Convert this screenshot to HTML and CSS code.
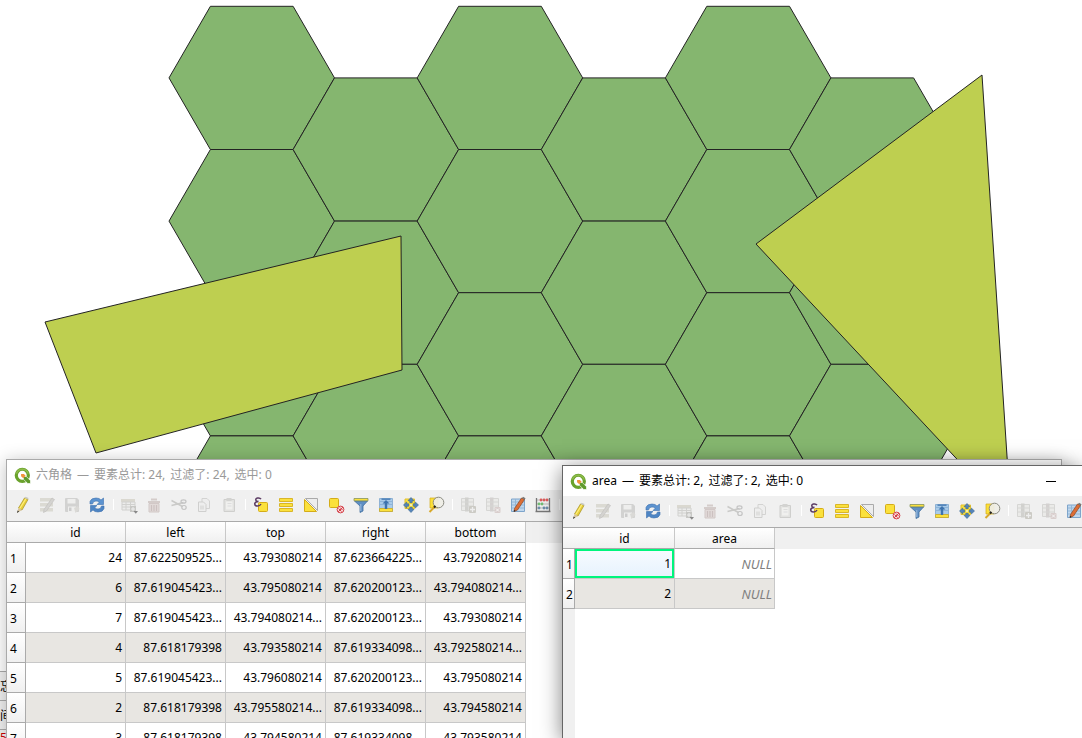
FILE: index.html
```html
<!DOCTYPE html>
<html lang="zh-CN">
<head>
<meta charset="utf-8">
<title>QGIS</title>
<link rel="stylesheet" href="styles.css">
</head>
<body>
<svg class="defs" aria-hidden="true">
  <symbol id="logo" viewBox="0 0 18 18">
    <circle cx="8.800" cy="8.800" r="6.400" fill="none" stroke="#6aa22c" stroke-width="3.400"/>
    <path d="M2.600 7a6.500 6.500 0 0 1 12.400 0" fill="none" stroke="#8dbb4a" stroke-width="1.500"/>
    <path d="M10 10h3l4.500 4.500V17.500H14.500L10 13z" fill="#5f9a2b" stroke="#fff" stroke-width=".7"/>
    <path d="M7.500 7.500h3l1.800 1.800-2.500 2.500-2.300-2z" fill="#f1943c"/>
  </symbol>
  <symbol id="pencil" viewBox="0 0 18 18">
    <path d="M11.500 2l3.500 1.500-6 10.500-3.500-2z" fill="#e8cf3c" stroke="#a58f21" stroke-width=".7"/>
    <path d="M13 2.500l-6.500 10.500" stroke="#fff07a" stroke-width="1.200"/>
    <path d="M11.500 2l1-1.300 3 1.400-.5 1.400z" fill="#c8c8c0"/>
    <path d="M5.500 12l3.500 2-5 3z" fill="#d6c39b"/><path d="M4 17l.6-2.600 1.600 1.200z" fill="#333"/>
  </symbol>
  <symbol id="multi" viewBox="0 0 18 18">
    <path d="M2 2h13v3.500H2zM2 7h13v3.500H2zM2 12h13v3.500H2z" fill="#c8c5b8"/>
    <path d="M14 2l2.500 1.500-8 11.500-3 1.500.5-3z" fill="#b9b7b2" stroke="#8e8d88" stroke-width=".6"/>
  </symbol>
  <symbol id="save" viewBox="0 0 18 18">
    <path d="M2 3q0-1 1-1h11l2 2v11q0 1-1 1H3q-1 0-1-1z" fill="#b5b5b3"/>
    <path d="M4.500 3h8v4.500h-8zM5 10.500h8V16H5z" fill="#eeeeec"/>
    <path d="M6 11.500h2.500v3.500H6z" fill="#aaa"/><path d="M11 12l4-2 1.500 3-4 4z" fill="#c6c4bd"/>
  </symbol>
  <symbol id="refresh" viewBox="0 0 18 18">
    <path d="M2 8V5.500Q3 2 8 2q3.500 0 5 2l2.500-2v6.500H9l2.300-2.300Q10 5 8 5 5 5 4.500 8z" fill="#5c93d0" stroke="#3c70ae" stroke-width=".6"/>
    <path d="M16 10v2.500Q15 16 10 16q-3.500 0-5-2l-2.500 2V9.500H9l-2.300 2.300Q8 13 10 13q3 0 3.500-3z" fill="#4e85c4" stroke="#3c70ae" stroke-width=".6"/>
  </symbol>
  <symbol id="add" viewBox="0 0 18 18">
    <path d="M1 3h14v3H1z" fill="#c5c1b1"/><path d="M2 6h13v8H2z" fill="#e9e9e7" stroke="#b4b4b0"/>
    <path d="M2 8.500h13M2 11h13M6 6v8M10.500 6v8" stroke="#b4b4b0"/>
    <path d="M10 10h6v6h-6z" fill="#a2a29c"/><path d="M13 11v4M11 13h4" stroke="#eee"/><path d="M13.500 15h4.500l-2.200 2.700z" fill="#222"/>
  </symbol>
  <symbol id="trash" viewBox="0 0 18 18">
    <path d="M3 5h12v2H3zM6 2.500h6v2H6z" fill="#baa9a6"/>
    <path d="M4 7.500h10v8.500H4z" fill="#d4c5c2" stroke="#b5a29f"/><path d="M6.500 9v6M9 9v6M11.500 9v6" stroke="#a99491" stroke-width="1.200"/>
  </symbol>
  <symbol id="cut" viewBox="0 0 18 18">
    <path d="M1.500 4.500l11 6M1.500 9.500l12-3" stroke="#a5a5a2" stroke-width="1.500" fill="none"/>
    <ellipse cx="13.500" cy="5.500" rx="2.500" ry="1.700" fill="none" stroke="#999" stroke-width="1.200"/>
    <ellipse cx="14" cy="11.500" rx="2.200" ry="2" fill="none" stroke="#999" stroke-width="1.200"/>
  </symbol>
  <symbol id="copy" viewBox="0 0 18 18">
    <path d="M7 2.500h5l2.500 2.500v7.500H7z" fill="#eee" stroke="#b8b8b5"/>
    <path d="M3.500 6h5L11 8.500v7H3.500z" fill="#eee" stroke="#b0b0ad"/><path d="M5 9.500h4v4H5z" fill="#d0d0cd"/>
  </symbol>
  <symbol id="paste" viewBox="0 0 18 18">
    <path d="M4 3.500h10.500v12H4z" fill="#d5d5d1" stroke="#b0b0ac"/><path d="M6 5.500h6.500v8H6z" fill="#f0f0ee"/>
    <path d="M6.500 2h5v3h-5z" fill="#b7b7b3"/><path d="M7.500 7.500h4M7.500 10h4" stroke="#ccc"/>
  </symbol>
  <symbol id="expr" viewBox="0 0 18 18">
    <rect x="6.500" y="6.500" width="9" height="9" rx="1" fill="#fbe13c" stroke="#d4ac18"/>
    <path d="M9 3.200Q8 1.500 5.500 2 3.200 2.600 4 4.500 4.500 5.700 6.500 5.600 3 5.700 2.700 7.700 2.700 10 5.500 10 8 10 9 8" fill="none" stroke="#5b3b63" stroke-width="1.500"/>
  </symbol>
  <symbol id="all" viewBox="0 0 18 18">
    <path d="M2.500 2.500h13v3h-13zM2.500 7.500h13v3h-13zM2.500 12.500h13v3h-13z" fill="#fbe13c" stroke="#d9b629" stroke-linejoin="round"/>
  </symbol>
  <symbol id="invert" viewBox="0 0 18 18">
    <path d="M3.500 2.500h12v12z" fill="#ededed" stroke="#aaa"/><path d="M2.500 3.500l12 12h-12z" fill="#fbe13c" stroke="#d4ac18"/>
  </symbol>
  <symbol id="deselect" viewBox="0 0 18 18">
    <rect x="2.500" y="2.500" width="9" height="9" rx="1" fill="#fbe13c" stroke="#d4ac18"/>
    <circle cx="13.500" cy="13.500" r="3.400" fill="#f8dada" stroke="#d4414a"/><path d="M11 16l5-5M11.500 12.500l3 3M13 11.500l2.500 2.500" stroke="#d4414a"/>
  </symbol>
  <symbol id="filter" viewBox="0 0 18 18">
    <path d="M2.500 5h13L11 10v5l-3 1.500V10z" fill="#5f8fc3" stroke="#42709f" stroke-width=".8"/>
    <path d="M2 2.500h14v2.300H2z" fill="#fbe13c" stroke="#87935c" stroke-width=".8"/><path d="M8.800 8v7" stroke="#9ebcdf"/>
  </symbol>
  <symbol id="top" viewBox="0 0 18 18">
    <path d="M2.500 2.500h13v13h-13z" fill="#a9cbe9" stroke="#8fb2d4"/><path d="M3 5.500h12M3 8.500h12" stroke="#8db4d9"/>
    <path d="M2.500 12.500h13v3h-13z" fill="#fbe13c" stroke="#cbb13b"/><path d="M4.500 2.500h9v1.200h-9zM9 4l3.500 3.500h-2.300V13H7.800V7.500H5.500z" fill="#3d73ae"/>
  </symbol>
  <symbol id="pan" viewBox="0 0 18 18">
    <path d="M3 3h9.500v9.500H3z" fill="#fbe13c" stroke="#e2c02c"/>
    <path d="M9 1.500l3 3.200h-1.800v2H7.800v-2H6zM9 16.500l3-3.200h-1.800v-2H7.800v2H6zM1.500 9l3.200-3v1.800h2v2.400h-2V12zM16.500 9l-3.200-3v1.800h-2v2.400h2V12z" fill="#5585bc" stroke="#38658f" stroke-width=".6"/>
    <path d="M8 8h2v2H8z" fill="#f7f0ae"/>
  </symbol>
  <symbol id="zoom" viewBox="0 0 18 18">
    <path d="M3 2h8v10H3z" fill="#fbdf38" stroke="#d4ac18" stroke-width=".7"/>
    <circle cx="11.500" cy="6.500" r="5.300" fill="#eeede5" fill-opacity=".94" stroke="#8b8b82"/>
    <path d="M8 10.500L2.500 16" stroke="#d8a92a" stroke-width="2"/><path d="M8.500 10l-1.500 1.500" stroke="#222" stroke-width="2"/>
  </symbol>
  <symbol id="newfield" viewBox="0 0 18 18">
    <path d="M2.500 2.500h12v12h-12z" fill="#e5e5e2" stroke="#bdbdb9"/><path d="M6 1.500h3.500v14H6z" fill="#b3b3ad"/><path d="M2.500 6h12M2.500 10h12" stroke="#bdbdb9"/>
    <rect x="10" y="10" width="7" height="7" rx="1" fill="#aaa79c"/><path d="M13.500 11v5M11 13.500h5" stroke="#eee" stroke-width="1.300"/>
  </symbol>
  <symbol id="delfield" viewBox="0 0 18 18">
    <path d="M2.500 2.500h12v12h-12z" fill="#e5e5e2" stroke="#bdbdb9"/><path d="M6 1.500h3.500v14H6z" fill="#b9b4b2"/><path d="M2.500 6h12M2.500 10h12" stroke="#bdbdb9"/>
    <rect x="10.500" y="11" width="6" height="6" rx="1" fill="#c3aeac"/><path d="M12 12.500l3 3m0-3l-3 3" stroke="#fff"/>
  </symbol>
  <symbol id="organize" viewBox="0 0 18 18">
    <path d="M2.500 3h13v12.500h-13z" fill="#bfd7ee" stroke="#7ea5cb"/><path d="M3 6h12M3 9h12M3 12h12M6.500 3v12" stroke="#93b6d6"/>
    <path d="M12.500 2l3 1.500L8.500 14l-3.500 1.500.5-3z" fill="#dd6d35" stroke="#8a4a2a" stroke-width=".7"/><path d="M13 2l1-1.200 2.600 1.500-1 1.200z" fill="#777"/><path d="M4.800 15.800l.2-2 1.600 1.200z" fill="#222"/>
  </symbol>
  <symbol id="abacus" viewBox="0 0 18 18">
    <path d="M2 4h14M2 8h14M2 12h14" stroke="#bbb"/>
    <path d="M2.500 2v14M15.500 2v14M1.500 15.500h15" stroke="#777" stroke-width="1.300"/>
    <g fill="#de5c5c"><circle cx="7" cy="4" r="1.400"/><circle cx="10" cy="4" r="1.400"/><circle cx="13" cy="4" r="1.400"/></g>
    <g fill="#72bd74"><circle cx="5" cy="8" r="1.400"/><circle cx="8" cy="8" r="1.400"/></g>
    <g fill="#6d8eaa"><circle cx="5" cy="12" r="1.400"/><circle cx="10" cy="12" r="1.400"/><circle cx="13" cy="12" r="1.400"/></g>
  </symbol>
</svg>

<main class="desktop">
  <svg class="map" viewBox="0 0 1082 738" preserveAspectRatio="xMinYMin slice" role="img" aria-label="六角格">
    <defs><path id="hex" d="M0 71.600L41.400 0h82.700l41.400 71.600-41.400 71.600H41.400z"/></defs>
    <g fill="#85b66f" stroke="#232323">
      <use href="#hex" x="169" y="6.300"/><use href="#hex" x="169" y="149.500"/><use href="#hex" x="169" y="292.700"/><use href="#hex" x="169" y="435.900"/>
      <use href="#hex" x="293.100" y="77.900"/><use href="#hex" x="293.100" y="221.100"/><use href="#hex" x="293.100" y="364.300"/>
      <use href="#hex" x="417.200" y="6.300"/><use href="#hex" x="417.200" y="149.500"/><use href="#hex" x="417.200" y="292.700"/><use href="#hex" x="417.200" y="435.900"/>
      <use href="#hex" x="541.300" y="77.900"/><use href="#hex" x="541.300" y="221.100"/><use href="#hex" x="541.300" y="364.300"/>
      <use href="#hex" x="665.400" y="6.300"/><use href="#hex" x="665.400" y="149.500"/><use href="#hex" x="665.400" y="292.700"/><use href="#hex" x="665.400" y="435.900"/>
      <use href="#hex" x="789.500" y="77.900"/><use href="#hex" x="789.500" y="221.100"/><use href="#hex" x="789.500" y="364.300"/>
    </g>
    <path d="M45 322l356-86 1 134-306 83zM982 75L756 244l255 273z" fill="#becf50" stroke="#232323"/>
  </svg>

  <aside class="dock"><div class="dock-row">忘</div><div class="dock-row">间</div><div class="dock-row dock-red">5</div></aside>

  <section class="window window-grid">
    <header class="titlebar titlebar-inactive"><svg class="logo"><use href="#logo"/></svg><span>六角格</span><span>—</span><span>要素总计: 24,</span><span>过滤了: 24,</span><span>选中: 0</span></header>
    <nav class="toolbar">
      <button class="tool" aria-label="切换编辑模式"><svg><use href="#pencil"/></svg></button>
      <button class="tool" disabled aria-label="多重编辑"><svg><use href="#multi"/></svg></button>
      <button class="tool" disabled aria-label="保存编辑"><svg><use href="#save"/></svg></button>
      <button class="tool" aria-label="重新加载"><svg><use href="#refresh"/></svg></button>
      <span class="sep"></span>
      <button class="tool" disabled aria-label="添加要素"><svg><use href="#add"/></svg></button>
      <button class="tool" disabled aria-label="删除要素"><svg><use href="#trash"/></svg></button>
      <button class="tool" disabled aria-label="剪切"><svg><use href="#cut"/></svg></button>
      <button class="tool" disabled aria-label="复制"><svg><use href="#copy"/></svg></button>
      <button class="tool" disabled aria-label="粘贴"><svg><use href="#paste"/></svg></button>
      <span class="sep"></span>
      <button class="tool" aria-label="按表达式选择"><svg><use href="#expr"/></svg></button>
      <button class="tool" aria-label="全选"><svg><use href="#all"/></svg></button>
      <button class="tool" aria-label="反选"><svg><use href="#invert"/></svg></button>
      <button class="tool" aria-label="取消选择"><svg><use href="#deselect"/></svg></button>
      <button class="tool" aria-label="过滤"><svg><use href="#filter"/></svg></button>
      <button class="tool" aria-label="移到顶部"><svg><use href="#top"/></svg></button>
      <button class="tool" aria-label="平移"><svg><use href="#pan"/></svg></button>
      <button class="tool" aria-label="缩放"><svg><use href="#zoom"/></svg></button>
      <span class="sep"></span>
      <button class="tool" disabled aria-label="新建字段"><svg><use href="#newfield"/></svg></button>
      <button class="tool" disabled aria-label="删除字段"><svg><use href="#delfield"/></svg></button>
      <button class="tool" aria-label="组织列"><svg><use href="#organize"/></svg></button>
      <button class="tool" aria-label="字段计算器"><svg><use href="#abacus"/></svg></button>
      <span class="sep"></span>
    </nav>
    <div class="sheet">
      <table class="grid">
        <colgroup><col class="col-num"><col class="col"><col class="col"><col class="col"><col class="col"><col class="col"></colgroup>
        <thead><tr><th class="corner"></th><th>id</th><th>left</th><th>top</th><th>right</th><th>bottom</th></tr></thead>
        <tbody>
          <tr><th>1</th><td>24</td><td>87.622509525...</td><td>43.793080214</td><td>87.623664225...</td><td>43.792080214</td></tr>
          <tr><th>2</th><td>6</td><td>87.619045423...</td><td>43.795080214</td><td>87.620200123...</td><td>43.794080214...</td></tr>
          <tr><th>3</th><td>7</td><td>87.619045423...</td><td>43.794080214...</td><td>87.620200123...</td><td>43.793080214</td></tr>
          <tr><th>4</th><td>4</td><td>87.618179398</td><td>43.793580214</td><td>87.619334098...</td><td>43.792580214...</td></tr>
          <tr><th>5</th><td>5</td><td>87.619045423...</td><td>43.796080214</td><td>87.620200123...</td><td>43.795080214</td></tr>
          <tr><th>6</th><td>2</td><td>87.618179398</td><td>43.795580214...</td><td>87.619334098...</td><td>43.794580214</td></tr>
          <tr><th>7</th><td>3</td><td>87.618179398</td><td>43.794580214</td><td>87.619334098...</td><td>43.793580214</td></tr>
        </tbody>
      </table>
    </div>
  </section>

  <section class="window window-area">
    <header class="titlebar"><svg class="logo"><use href="#logo"/></svg><span>area</span><span>—</span><span>要素总计: 2,</span><span>过滤了: 2,</span><span>选中: 0</span><button class="minimize" aria-label="最小化"></button></header>
    <nav class="toolbar">
      <button class="tool" aria-label="切换编辑模式"><svg><use href="#pencil"/></svg></button>
      <button class="tool" disabled aria-label="多重编辑"><svg><use href="#multi"/></svg></button>
      <button class="tool" disabled aria-label="保存编辑"><svg><use href="#save"/></svg></button>
      <button class="tool" aria-label="重新加载"><svg><use href="#refresh"/></svg></button>
      <span class="sep"></span>
      <button class="tool" disabled aria-label="添加要素"><svg><use href="#add"/></svg></button>
      <button class="tool" disabled aria-label="删除要素"><svg><use href="#trash"/></svg></button>
      <button class="tool" disabled aria-label="剪切"><svg><use href="#cut"/></svg></button>
      <button class="tool" disabled aria-label="复制"><svg><use href="#copy"/></svg></button>
      <button class="tool" disabled aria-label="粘贴"><svg><use href="#paste"/></svg></button>
      <span class="sep"></span>
      <button class="tool" aria-label="按表达式选择"><svg><use href="#expr"/></svg></button>
      <button class="tool" aria-label="全选"><svg><use href="#all"/></svg></button>
      <button class="tool" aria-label="反选"><svg><use href="#invert"/></svg></button>
      <button class="tool" aria-label="取消选择"><svg><use href="#deselect"/></svg></button>
      <button class="tool" aria-label="过滤"><svg><use href="#filter"/></svg></button>
      <button class="tool" aria-label="移到顶部"><svg><use href="#top"/></svg></button>
      <button class="tool" aria-label="平移"><svg><use href="#pan"/></svg></button>
      <button class="tool" aria-label="缩放"><svg><use href="#zoom"/></svg></button>
      <span class="sep"></span>
      <button class="tool" disabled aria-label="新建字段"><svg><use href="#newfield"/></svg></button>
      <button class="tool" disabled aria-label="删除字段"><svg><use href="#delfield"/></svg></button>
      <button class="tool" aria-label="组织列"><svg><use href="#organize"/></svg></button>
    </nav>
    <div class="sheet sheet-narrow">
      <table class="grid">
        <colgroup><col class="col-slim"><col class="col"><col class="col"></colgroup>
        <thead><tr><th class="corner"></th><th>id</th><th>area</th></tr></thead>
        <tbody>
          <tr><th>1</th><td class="current">1</td><td class="null">NULL</td></tr>
          <tr><th>2</th><td>2</td><td class="null">NULL</td></tr>
        </tbody>
      </table>
    </div>
  </section>
</main>
</body>
</html>
```
FILE: styles.css
```css
* { box-sizing: border-box; }
body {
  margin: 0;
  background: #fff;
  color: #000;
  font: 12px/16px "Noto Sans", "Noto Sans CJK SC", sans-serif;
}
.defs { position: absolute; width: 0; height: 0; }
.desktop { position: relative; height: 100vh; overflow: hidden; }
.map { display: block; width: 100%; height: 100%; }

.dock {
  position: absolute;
  left: 0;
  bottom: 0;
  width: 6px;
  height: 67px;
  overflow: hidden;
  background: #f0f0f0;
}
.dock-row { height: 29px; padding-top: 7px; border-top: 1px solid #aaa; white-space: nowrap; }
.dock-red { padding-top: 0; color: #c00; }

.window {
  position: absolute;
  bottom: 0;
  display: flex;
  flex-direction: column;
  background: #fff;
}
.window-grid {
  top: 459px;
  left: 6px;
  right: 20px;
  border: 1px solid #aaa;
  border-bottom: 0;
  box-shadow: 0 2px 16px rgba(0, 0, 0, .25);
}
.window-area {
  top: 465px;
  left: 562px;
  right: 0;
  border-top: 1px solid #666;
  border-left: 1px solid #666;
  box-shadow: 0 4px 20px rgba(0, 0, 0, .5);
}
.titlebar {
  display: flex;
  flex: none;
  align-items: center;
  gap: 5px;
  height: 30px;
  padding: 0 26px 0 7px;
  white-space: nowrap;
}
.titlebar-inactive { color: #999; }
.logo { width: 17px; height: 17px; }
.minimize {
  width: 11px;
  height: 16px;
  margin-left: auto;
  padding: 0;
  border: 0;
  background: linear-gradient(#000, #000) center / 10px 1px no-repeat;
}
.toolbar {
  display: flex;
  flex: none;
  align-items: center;
  height: 31px;
  padding: 0 0 2px 2px;
  overflow: hidden;
  background: #f0f0f0;
}
.tool {
  display: flex;
  flex: none;
  align-items: center;
  justify-content: center;
  width: 25px;
  height: 25px;
  padding: 0;
  border: 0;
  background: none;
}
.tool svg { width: 18px; height: 18px; }
.tool:disabled { opacity: .5; }
.sep {
  flex: none;
  width: 7px;
  height: 11px;
  background: linear-gradient(#fff, #fff) 4px 0 / 1px 100% no-repeat;
}

.sheet {
  flex: 1;
  min-height: 0;
  overflow: hidden;
  border-top: 1px solid #aaa;
  background: linear-gradient(#f0f0f0, #f0f0f0) 0 0 / 100% 21px no-repeat;
}
.sheet-narrow {
  background:
    linear-gradient(#f0f0f0, #f0f0f0) 0 0 / 100% 21px no-repeat,
    linear-gradient(#f0f0f0, #f0f0f0) 0 0 / 12px 100% no-repeat;
}
.grid { width: min-content; table-layout: fixed; border-collapse: separate; border-spacing: 0; }
.col-num { width: 19px; }
.col-slim { width: 12px; }
.col { width: 100px; }
.grid th, .grid td { font-weight: 400; white-space: nowrap; }
.grid thead th {
  height: 21px;
  padding: 1px 0 0;
  border-right: 1px solid #c8c8c8;
  border-bottom: 1px solid #aaa;
  background: linear-gradient(#fff, #f0f0f0);
}
.grid thead .corner { border-right: 0; }
.grid tbody th {
  height: 30px;
  padding: 2px 0 0 3px;
  border-right: 1px solid #aaa;
  border-bottom: 1px solid #aaa;
  background: linear-gradient(#fff, #f0f0f0);
  text-align: left;
}
.grid td {
  height: 30px;
  padding: 0 3px;
  border-right: 1px solid #c8c8c8;
  border-bottom: 1px solid #c8c8c8;
  background: #fff;
  text-align: right;
}
.grid tr:nth-child(even) td { background: #e8e6e2; }
.grid td.current {
  background: linear-gradient(#f7fbff, #e6f2fd);
  box-shadow: inset 0 0 0 2px #00f57c;
}
.grid td.null { padding-right: 2px; color: #808080; font-size: 13px; font-style: italic; }
```
